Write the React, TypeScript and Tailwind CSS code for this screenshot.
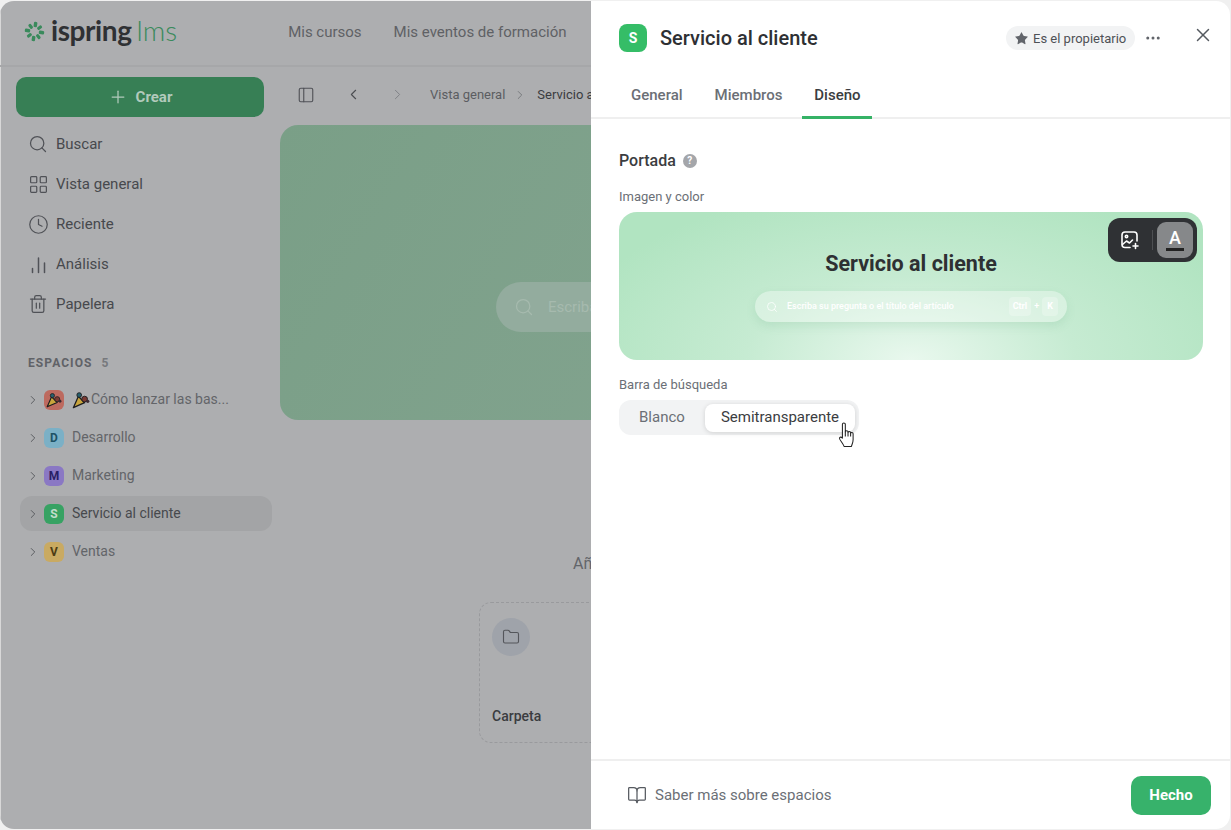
import { BookOpen, ChevronLeft, ChevronRight, Clock, Folder, LayoutGrid, MoreHorizontal, PanelLeft, Plus, Search, Star, Trash2, X } from "lucide-react";

const FONT = "[font-family:Roboto,'Liberation_Sans',sans-serif]";

const NAV = [
  { label: "Buscar", icon: <Search size={20} strokeWidth={1.5} className="shrink-0" /> },
  { label: "Vista general", icon: <LayoutGrid size={21} strokeWidth={1.4} className="shrink-0" /> },
  { label: "Reciente", icon: <Clock size={21} strokeWidth={1.4} className="shrink-0" /> },
  { label: "Análisis", icon: <BarsIcon /> },
  { label: "Papelera", icon: <Trash2 size={20} strokeWidth={1.5} className="shrink-0" /> },
];

function BarsIcon() {
  return (
    <svg width="19" height="19" viewBox="0 0 19 19" fill="none" stroke="currentColor" strokeWidth="1.5" strokeLinecap="round">
      <path d="M3.5 17.5v-4M9.5 17.5V3M15.5 17.5V8" />
    </svg>
  );
}

function LogoMark() {
  const petals = [0, 45, 90, 135, 180, 225, 270, 315];
  return (
    <svg width="21" height="21" viewBox="0 0 22 22" fill="#3a8a5c" className="mb-[2px]">
      {petals.map((a, i) => (
        <rect key={a} x={i % 2 ? 9.4 : 9.2} y={i % 2 ? 1.6 : 0.8} width={i % 2 ? 3.2 : 3.6} height={i % 2 ? 5.4 : 5.6} rx="1.2" transform={`rotate(${a + 8} 11 11)`} />
      ))}
    </svg>
  );
}

function Popper({ size }: { size: number }) {
  return (
    <svg width={size} height={size} viewBox="0 0 20 20">
      <path d="M1.5 18.5 7 6l7 7z" fill="#c9a53c" stroke="#1d1d1f" strokeWidth="1.4" strokeLinejoin="round" />
      <circle cx="8" cy="4.5" r="2.6" fill="#26606e" stroke="#1d1d1f" />
      <circle cx="14" cy="9" r="3.2" fill="#7a3b34" stroke="#1d1d1f" />
      <circle cx="17.5" cy="11.5" r="1.8" fill="#3c2a33" />
    </svg>
  );
}

function CoverImageIcon() {
  return (
    <svg width="20" height="20" viewBox="0 0 20 20" fill="none" stroke="currentColor" strokeWidth="1.6" strokeLinecap="round" strokeLinejoin="round">
      <path d="M10 17.5H5a3 3 0 0 1-3-3V5a3 3 0 0 1 3-3h9a3 3 0 0 1 3 3v6" />
      <circle cx="6.5" cy="6.5" r="1.2" />
      <path d="M2.5 14.5 6.5 11l3 2 3-3" />
      <path d="M15.5 13.5v5M13 16h5" />
    </svg>
  );
}

function HandCursor() {
  return (
    <svg width="19" height="27" viewBox="0 0 17 26" fill="#fff" stroke="#222" strokeWidth="1" strokeLinejoin="round" className="absolute left-[247px] top-[303px]">
      <path d="M3.6 2.2c0-1.6 2.8-1.6 2.8 0v7.3c0-1.4 2.6-1.4 2.6 0v.7c0-1.3 2.5-1.3 2.5 0v.8c0-1.2 2.4-1.2 2.4.2v6c0 3-1.2 4.3-1.6 6.3H5.2c-.8-2.3-3-4.6-4.2-7-.8-1.7 1-2.8 2.6-1z" />
      <path d="M6.4 9.5v4.5M9 10v4M11.5 11v3" fill="none" />
    </svg>
  );
}

const SPACES = [
  { letter: "", label: "Cómo lanzar las bas...", badge: "bg-[#bd6a5f]", ink: "", active: false },
  { letter: "D", label: "Desarrollo", badge: "bg-[#7bb0c6]", ink: "text-[#1e5266]", active: false },
  { letter: "M", label: "Marketing", badge: "bg-[#8a78c4]", ink: "text-[#2a1f66]", active: false },
  { letter: "S", label: "Servicio al cliente", badge: "bg-[#37a263]", ink: "text-[#c3dccd]", active: true },
  { letter: "V", label: "Ventas", badge: "bg-[#c9aa62]", ink: "text-[#4d3d14]", active: false },
];

function Sidebar() {
  return (
    <aside className="w-[280px] shrink-0 pt-[10px]">
      <div className="mx-4 h-[40px] rounded-[10px] bg-[#377f55] flex items-center justify-center gap-2 text-[#b2cabc] text-[15px] font-bold">
        <Plus size={20} strokeWidth={1.5} />
        Crear
      </div>
      <nav className="mt-[7px]">
        {NAV.map((item) => (
          <div key={item.label} className="h-10 pl-[28px] flex items-center gap-[8px] text-[15px] text-[#47494d]">
            <span className="w-[20px] flex justify-center text-[#505257]">{item.icon}</span>
            {item.label}
          </div>
        ))}
      </nav>
      <div className="mt-[30px] pl-[28px] text-[12px] font-bold tracking-[0.09em] text-[#606267] flex gap-[9px]">
        ESPACIOS <span className="text-[#77797d]">5</span>
      </div>
      <div className="mt-[10px] ml-5 w-[252px] flex flex-col gap-[3px]">
        {SPACES.map((s) => (
          <div key={s.label} className={`h-[35px] flex items-center pl-[6px] rounded-xl ${s.active ? "bg-[#a3a4a6] text-[#47494d]" : "text-[#636569]"} text-[14px]`}>
            <ChevronRight size={14} strokeWidth={1.6} className="text-[#55575b]" />
            <span className={`ml-[4px] w-5 h-5 rounded-[6px] flex items-center justify-center text-[12px] font-bold ${s.badge} ${s.ink}`}>
              {s.letter || <Popper size={16} />}
            </span>
            <span className="ml-2 flex items-center gap-px">
              {!s.letter && <Popper size={18} />}
              {s.label}
            </span>
          </div>
        ))}
      </div>
    </aside>
  );
}

function MainArea() {
  return (
    <main className="flex-1 min-w-0 overflow-hidden">
      <div className="h-[58px] flex items-center pl-[17px] pb-[3px] text-[#5b5d61] w-[600px]">
        <PanelLeft size={18} strokeWidth={1.5} className="shrink-0 text-[#505257]" />
        <ChevronLeft size={17} strokeWidth={1.6} className="shrink-0 ml-[30px] text-[#4d4f53]" />
        <ChevronRight size={17} strokeWidth={1.4} className="shrink-0 ml-[27px] text-[#808286]" />
        <span className="ml-[24px] text-[13px] whitespace-nowrap">Vista general</span>
        <ChevronRight size={14} strokeWidth={1.4} className="shrink-0 ml-[8px] mr-[10px] text-[#6c6e72]" />
        <span className="text-[13px] whitespace-nowrap text-[#3a3c40]">Servicio al cliente</span>
      </div>
      <div className="w-[900px] h-[295px] rounded-[18px] bg-[linear-gradient(120deg,#7a9f87,#88a694)] pt-[157px] pl-[216px]">
        <div className="w-[400px] h-[50px] rounded-[25px] bg-[#93ac9e] flex items-center pl-[18px] gap-[14px] text-[#a6baae] text-[15px] whitespace-nowrap">
          <Search size={20} strokeWidth={1.5} />
          Escriba su pregunta
        </div>
      </div>
      <div className="mt-[132px] pl-[293px] text-[16px] text-[#63656a] whitespace-nowrap">Añadir contenido</div>
      <div className="mt-[26px] ml-[199px] w-[400px] h-[141px] rounded-xl border border-dashed border-[#999a9d] pt-[15px] pl-[12px]">
        <div className="w-[38px] h-[38px] rounded-full bg-[#9fa3aa] flex items-center justify-center text-[#54565b]">
          <Folder size={18} strokeWidth={1.5} />
        </div>
        <div className="mt-[50px] text-[14px] font-medium text-[#3a3c40]">Carpeta</div>
      </div>
    </main>
  );
}

function DimmedApp() {
  return (
    <div className="w-[591px] shrink-0 bg-[#adaeb0] shadow-[inset_1px_0_0_#d8d8d8] flex flex-col overflow-hidden">
      <header className="h-[66px] shrink-0 border-b-2 border-[#a6a7a9] flex items-center pl-6 pb-[2px] whitespace-nowrap">
        <LogoMark />
        <span className="ml-[6px] mb-[4px] text-[28px] font-bold tracking-[-0.015em] text-[#2f3134] [font-family:Lato,sans-serif]">ispring</span>
        <span className="ml-[5px] mb-[4px] text-[28px] font-light text-[#3a8a5c] [font-family:Lato,sans-serif]">lms</span>
        <span className="ml-[111px] text-[15px] text-[#5f6165]">Mis cursos</span>
        <span className="ml-[32px] text-[15px] text-[#5f6165]">Mis eventos de formación</span>
      </header>
      <div className="flex flex-1 min-h-0">
        <Sidebar />
        <MainArea />
      </div>
    </div>
  );
}

function Cover() {
  return (
    <div className="relative mt-[6px] h-[148px] rounded-[18px] bg-[#b1e4c1] bg-[radial-gradient(ellipse_at_50%_100%,#e9f8ee_0%,#c6ebd2_40%,#b1e4c1_85%)] flex flex-col items-center">
      <div className="mt-[38px] text-[21.5px] leading-[28px] font-bold text-[#2e3033]">Servicio al cliente</div>
      <div className="mt-[13px] w-[312px] h-[31px] rounded-full bg-white/35 shadow-[0_4px_10px_rgba(90,160,120,0.15)] flex items-center pl-[11px] pr-[9px] text-white text-[9px] font-medium">
        <Search size={12} strokeWidth={1.5} />
        <span className="ml-[9px] flex-1">Escriba su pregunta o el título del artículo</span>
        <span className="px-1 py-[3px] rounded bg-white/25 font-bold">Ctrl</span>
        <span className="mx-[3px]">+</span>
        <span className="px-[5px] py-[3px] rounded bg-white/25 font-bold">K</span>
      </div>
      <div className="absolute top-[6px] right-[6px] w-[89px] h-[44px] rounded-[12px] bg-[#2f3134] flex items-center justify-end pr-1 text-white">
        <CoverImageIcon />
        <span className="ml-[12px] w-px h-[20px] bg-[#4d4f52] mr-[4px]" />
        <span className="w-9 h-9 rounded-[9px] bg-[#86888a] flex flex-col items-center justify-center">
          <span className="text-[18px] leading-[18px] font-medium">A</span>
          <span className="w-[18px] h-[3px] bg-[#222] mt-px" />
        </span>
      </div>
    </div>
  );
}

function SidePanel() {
  return (
    <section className="flex-1 min-w-0 bg-white flex flex-col">
      <div className="h-[118px] shrink-0 border-b-2 border-[#efefef] flex flex-col">
        <div className="h-[76px] flex items-center pl-7 pr-[17px]">
          <span className="w-7 h-7 rounded-lg bg-[#35bd67] text-white text-[14px] font-bold flex items-center justify-center">S</span>
          <span className="ml-[13px] text-[20px] font-medium text-[#2e3033] flex-1">Servicio al cliente</span>
          <span className="h-6 w-[129px] rounded-full bg-[#f2f3f4] flex items-center pl-[8px] gap-[4px] text-[13px] text-[#4e5156]">
            <Star size={15} fill="#62656b" strokeWidth={0} />
            Es el propietario
          </span>
          <MoreHorizontal size={18} className="ml-[9px] text-[#62656b]" />
          <X size={22} strokeWidth={1.6} className="ml-[30px] -mr-px mb-[6px] text-[#555a60]" />
        </div>
        <div className="flex pl-[40px] h-[42px] text-[15px] font-medium text-[#6b6f76]">
          <span className="pt-[8px]">General</span>
          <span className="ml-[32px] pt-[8px]">Miembros</span>
          <span className="ml-[20px] -mb-[2px] w-[70px] text-center pt-[8px] text-[#3b3d41] border-b-[3px] border-[#35b266]">Diseño</span>
        </div>
      </div>
      <div className="flex-1 pl-7 pr-[27px] pt-[32px] relative">
        <div className="flex items-center gap-[7px] text-[16px] leading-[20px] font-medium text-[#3b3d41]">
          Portada
          <span className="w-[14px] h-[14px] rounded-full bg-[#a4a6aa] text-white text-[10px] font-bold flex items-center justify-center">?</span>
        </div>
        <div className="mt-[17px] text-[13px] leading-[18px] text-[#6b6f76]">Imagen y color</div>
        <Cover />
        <div className="mt-[16px] text-[13px] leading-[18px] text-[#6b6f76]">Barra de búsqueda</div>
        <div className="mt-[6px] w-[240px] h-[35px] rounded-xl bg-[#f2f3f4] flex items-center pl-[20px] pr-1 text-[15px]">
          <span className="text-[#6b6f76] flex-1">Blanco</span>
          <span className="w-[150px] h-[28px] rounded-lg bg-white shadow-[0_1px_5px_rgba(0,0,0,0.14)] flex items-center justify-center text-[#3b3d41]">Semitransparente</span>
        </div>
        <HandCursor />
      </div>
      <div className="h-[70px] shrink-0 border-t-2 border-[#efefef] flex items-center pl-9 pr-[19px]">
        <BookOpen size={20} strokeWidth={1.5} className="text-[#565a60]" />
        <span className="ml-2 flex-1 text-[15px] text-[#6b6f76]">Saber más sobre espacios</span>
        <span className="w-20 h-[39px] rounded-[10px] bg-[#37b26b] text-white text-[15px] font-bold flex items-center justify-center">Hecho</span>
      </div>
    </section>
  );
}

export default function App() {
  return (
    <div className={`w-[1231px] h-[830px] bg-[#f0f0f0] pt-px pr-px pb-px overflow-hidden ${FONT}`}>
      <div className="w-full h-full rounded-[14px] overflow-hidden flex">
        <DimmedApp />
        <SidePanel />
      </div>
    </div>
  );
}
